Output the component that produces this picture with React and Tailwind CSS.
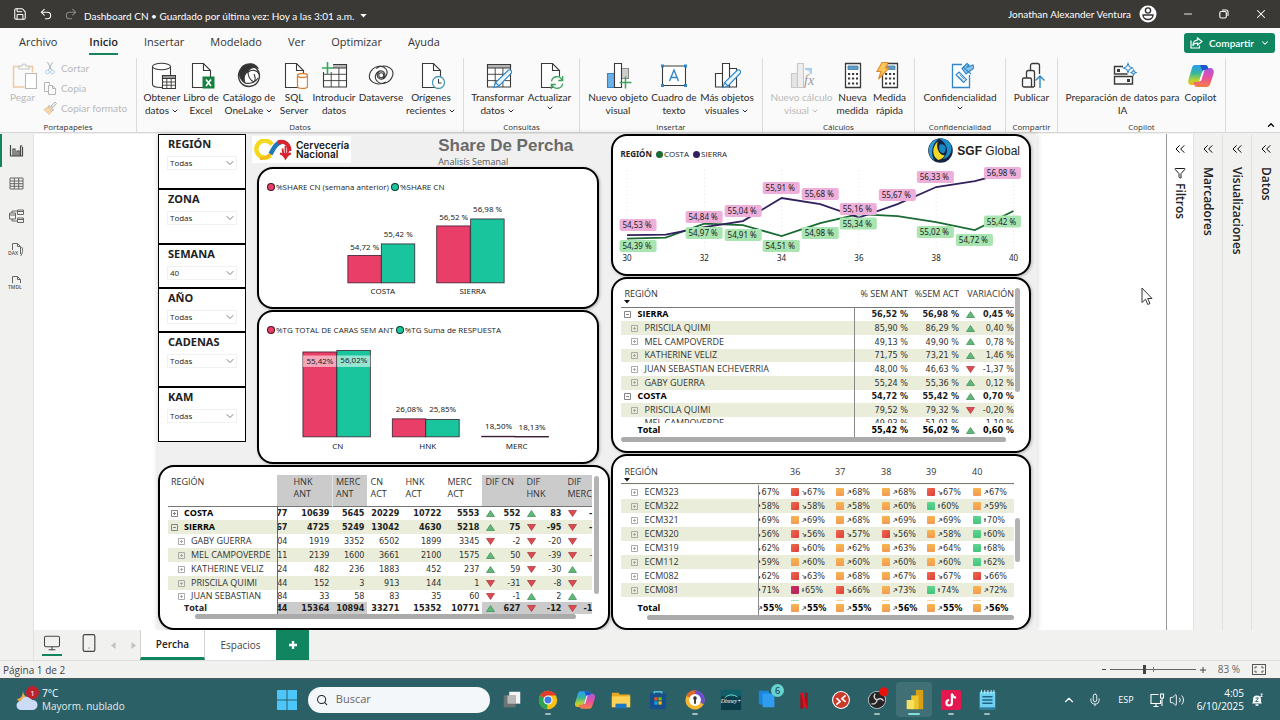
import React from "react";
import {
  Save, Undo2, Redo2, Minus, X, Search, ChevronDown, ChevronUp, ChevronsLeft,
  Filter, Mic, Volume2, Smartphone, Monitor,
} from "lucide-react";

const BLUE = "#2f86c8";
const GREEN = "#3ba55d";
const INK = "#3b3a39";

/* ---------- ribbon icons (28 x 28) ---------- */

const Icon = ({ children }) => (
  <svg viewBox="0 0 28 28" className="h-7 w-7 shrink-0" fill="none" stroke={INK} strokeWidth="1.1">
    {children}
  </svg>
);

const Page = () => (
  <>
    <path d="M5.5 1.5h11l7 7v17h-18z" fill="#fff" />
    <path d="M16.5 1.5v7h7" />
  </>
);

const Pencil = () => (
  <path d="M10 25.5l1.5-5L24 8.5a2 2 0 0 1 3 3L15 24z M11.5 20.5l3.5 3.5" fill="#e8f4fc" stroke={BLUE} />
);

const PasteIcon = () => (
  <Icon>
    <g stroke="#f0c9a0"><path d="M10 4.5H4.5v20.5h11M20 4.5h3.5v6" strokeWidth="1.5" /></g>
    <path d="M10 7V4h3a2 2 0 0 1 4 0h3v3z" stroke="#c4c4c4" fill="#fafafa" />
    <path d="M16.5 11.5h11v15h-11z" stroke="#b9b9b9" fill="#fff" />
  </Icon>
);
const DataIcon = () => (
  <Icon>
    <path d="M4.5 4.5v18c0 4 18 4 18 0v-18" fill="#fff" />
    <ellipse cx="13.5" cy="4.5" rx="9" ry="3.2" fill="#fff" />
    <path d="M14.5 13.5h13v13h-13z" fill="#fff" />
    <path d="M14.5 13.5h13v3h-13z" fill="#9a9a9a" />
    <path d="M14.5 20h13M14.5 23.2h13M18.8 16.5v10M23.2 16.5v10" strokeWidth=".9" />
  </Icon>
);
const ExcelIcon = () => (
  <Icon>
    <Page />
    <rect x="15.5" y="14.5" width="12" height="12" fill="#15803f" stroke="none" />
    <path d="M19 17.5l5 6.5M24 17.5l-5 6.5" stroke="#fff" strokeWidth="1.7" />
  </Icon>
);
const OneLakeIcon = () => (
  <Icon>
    <circle cx="14" cy="14" r="10.5" strokeWidth="1.3" fill="#fff" />
    <path d="M8 4c5-3.5 12-3 15 2-5-1.5-9 0-10 4-3 1-5 5-3 11-6-4-8-11-2-17z" fill="#333" />
    <path d="M13 10c0 5 2 8 6 10M13 10c4-3 9-2 11 2M10 21c4 1 10 0 13-5M19 20c1.5-2 1.5-5 0-8" stroke="#333" />
  </Icon>
);
const SqlIcon = () => (
  <Icon>
    <Page />
    <path d="M17.5 13.5v11c0 2.5 10 2.5 10 0v-11" fill="#fff" stroke="#d98032" strokeWidth="1.3" />
    <ellipse cx="22.5" cy="13.5" rx="5" ry="2" fill="#fff" stroke="#d98032" strokeWidth="1.3" />
  </Icon>
);
const Grid = () => (
  <>
    <path d="M3.5 2.5h23v22.5h-23z" fill="#fff" />
    <path d="M3.5 2.5h23v3.5h-23z" fill="#b5b5b5" />
    <path d="M3.5 12.3h23M3.5 18.6h23M11.2 6v19M18.9 6v19" strokeWidth=".9" />
  </>
);
const EnterIcon = () => (
  <Icon>
    <Grid />
    <path d="M1 0h12v10H1z" fill="#fafafa" stroke="none" />
    <path d="M7.5 0v12M2 6h11.5" stroke={GREEN} strokeWidth="1.6" />
  </Icon>
);
const DataverseIcon = () => (
  <Icon>
    <path d="M19 20C9 25 0 19 3 11 6 4 15 2 19 7c3 4-1 11-6 10-3-1-4-5-1-7" />
    <path d="M9 6.5C18 1 28 6 25.5 14 23 21 14 24 10 19c-4-4 0-11 5-10 3 1 4 5 1 7" />
    <circle cx="14.2" cy="13.2" r="2.5" />
  </Icon>
);
const RecentIcon = () => (
  <Icon>
    <Page />
    <circle cx="21.5" cy="20.5" r="6" fill="#fff" stroke="#4b9db5" strokeWidth="1.3" />
    <path d="M21.5 17v4h3" />
  </Icon>
);
const TransformIcon = () => <Icon><Grid /><Pencil /></Icon>;
const RefreshIcon = () => (
  <Icon>
    <Page />
    <circle cx="21" cy="20.5" r="6.5" fill="#fafafa" stroke="none" />
    <path d="M15.5 19.5a5.5 5.5 0 0 1 10.5-1.5M26.7 14v4.5h-4.5M26.7 21.5a5.5 5.5 0 0 1-10.5 1.5M15.3 27v-4.5h4.5" stroke={GREEN} strokeWidth="1.3" />
  </Icon>
);
const NewVisualIcon = () => (
  <Icon>
    <path d="M3.5 11.5h7v14h-7z" fill="#69b1e6" stroke={BLUE} />
    <path d="M17.5 6.5h7v10h-7z" fill="#cfcfcf" stroke="#8a8a8a" />
    <path d="M10.5 1.5h7v24h-7z" fill="#fff" />
    <path d="M21.5 14.5v12M15.5 20.5h12" stroke={GREEN} strokeWidth="1.5" />
  </Icon>
);
const TextBoxIcon = () => (
  <Icon>
    <path d="M2.5 4h23v19.5h-23z" fill="#fff" />
    <path d="M9.5 19L14 8l4.5 11M11 15.5h6" stroke={BLUE} strokeWidth="1.4" />
    <g fill={BLUE} stroke="none">
      <rect x="1" y="2.5" width="3" height="3" /><rect x="24" y="2.5" width="3" height="3" />
      <rect x="1" y="22" width="3" height="3" /><rect x="24" y="22" width="3" height="3" />
    </g>
  </Icon>
);
const MoreVisualsIcon = () => (
  <Icon>
    <path d="M2.5 11.5h7v13.5h-7zM16.5 6.5h7v18.5h-7z" fill="#fff" />
    <path d="M9.5 1.5h7V25h-7z" fill="#fff" />
    <Pencil />
  </Icon>
);
const NewCalcIcon = () => (
  <Icon>
    <g stroke="#c8c8c8">
      <path d="M3.5 11.5h6v14h-6z" fill="#e4e4e4" /><path d="M9.5 1.5h6v24h-6z" fill="#eee" />
      <path d="M17 7h6v5" fill="#cfe3f2" stroke="#a9cfe8" strokeWidth="2" />
    </g>
    <text x="16" y="23" fontFamily="Liberation Serif, serif" fontSize="14" fontStyle="italic" fill="#999" stroke="none">fx</text>
  </Icon>
);
const Calc = ({ x = 6 }) => (
  <g transform={`translate(${x} 0)`}>
    <path d="M.5 1.5h15v24H.5z" fill="#fff" strokeWidth="1.3" />
    <path d="M3 4h10v3.5H3z" fill="#5b9fd0" stroke="#47769b" strokeWidth=".8" />
    <path d="M3 12h10M3 16.5h10M3 21.5h10" strokeDasharray="2.2 1.8" strokeWidth="2.2" />
  </g>
);
const MeasureIcon = () => <Icon><Calc x={6} /></Icon>;
const QuickIcon = () => (
  <Icon>
    <Calc x={6} />
    <path d="M6 .5h6L9.5 6H13L2.5 17 5 9.5H1z" fill="#fbc75a" stroke="#e08a2c" />
  </Icon>
);
const SensitivityIcon = () => (
  <Icon>
    <path d="M16 2.5H6.5v23h17V13" stroke={BLUE} strokeWidth="1.3" fill="#fff" />
    <g stroke={BLUE} fill="#fff">
      <path d="M10 13l3-3 7.5 7.5-3 3z" /><path d="M12 14l5.5 5M13.5 12.5l5 5" strokeWidth=".8" />
      <path d="M16 6.5l5-5 2 1.5-2.5 2.5L27 3l1 3-8 6z" fill="#8cc3ea" />
      <path d="M17 5l8 7" />
    </g>
  </Icon>
);
const PublishIcon = () => (
  <Icon>
    <path d="M12.5 8.5V3.5a2 2 0 0 1 2-2h5a2 2 0 0 1 2 2V12M8.5 16v-5.5a2 2 0 0 1 2-2h4a2 2 0 0 1 2 2V25M16 25H6a1.5 1.5 0 0 1-1.5-1.5v-6A1.5 1.5 0 0 1 6 16h6a1.5 1.5 0 0 1 1.5 1.5V25" strokeWidth="1.3" />
    <path d="M22 26V14M17.5 18.5L22 14l4.5 4.5" stroke={BLUE} strokeWidth="1.4" />
  </Icon>
);
const PrepIcon = () => (
  <Icon>
    <path d="M14 4.5H5.5v7.5h13M5.5 14.5h18V22h-18z" strokeWidth="1.4" />
    <path d="M8 7h3v3H8zM18 17h3v3h-3z" fill={INK} stroke="none" />
    <path d="M19 1.5l1.3 3.2 3.2 1.3-3.2 1.3L19 10.5l-1.3-3.2L14.5 6l3.2-1.3zM24.5 8l.8 1.7 1.7.8-1.7.8-.8 1.7-.8-1.7-1.7-.8 1.7-.8z" stroke={BLUE} fill="#fff" />
  </Icon>
);
const CopilotShape = ({ id, className }) => (
  <svg viewBox="0 0 28 28" className={className}>
    <defs>
      <linearGradient id={id + "a"} x1="0" y1="0" x2="0" y2="1">
        <stop offset="0" stopColor="#2a9df4" /><stop offset=".4" stopColor="#35b6a0" />
        <stop offset=".75" stopColor="#b5d334" /><stop offset="1" stopColor="#f7b526" />
      </linearGradient>
      <linearGradient id={id + "b"} x1="0" y1="0" x2="0" y2="1">
        <stop offset="0" stopColor="#a65ae8" /><stop offset=".5" stopColor="#e94f9c" /><stop offset="1" stopColor="#f58046" />
      </linearGradient>
    </defs>
    <path d="M8 3h10c2 0 2.5 1 3 3l1 3h-4c-2 0-3 1-3.5 3l-2.5 8c-.6 2-1.5 3-3.5 3H5c-3 0-4.5-2-3.5-5.5l3-10C5.2 4.3 6.2 3 8 3z" fill={`url(#${id}a)`} />
    <path d="M20 25H10c-2 0-2.5-1-3-3l-.5-2h4c2 0 3-1 3.5-3l2.5-8c.6-2 1.5-3 3.5-3h3c3 0 4.5 2.5 3.5 6l-3 9c-.8 2.7-1.7 4-3.5 4z" fill={`url(#${id}b)`} />
    <path d="M13 3h5c2 0 2.5 1 3 3l.4 1.2C18 7 16.5 8 16 10z" fill="#1d57c9" />
    <path d="M12.5 18.5l3-9c.4-1 1-1.5 2-1.5l-3 10c-.4 1-1 1.5-2 .5z" fill="#fff" opacity=".9" />
  </svg>
);
const CopilotIcon = () => <CopilotShape id="rb" className="h-7 w-7" />;

/* ---------- ribbon ---------- */

const RibbonButton = ({ icon: I, l1, l2, caret, w, off }) => (
  <button className={`flex ${w} shrink-0 flex-col items-center pt-1 font-['Lato'] text-[10px] leading-[13px] whitespace-nowrap ${off ? "text-[#b9b9b9]" : "text-[#2b2b2b]"}`}>
    <I />
    <span className="mt-px">{l1}</span>
    <span className="flex items-center justify-center gap-0.5">
      {l2}
      {caret && <ChevronDown className="size-2" strokeWidth={3} />}
    </span>
  </button>
);

const RibbonGroup = ({ label, w, children }) => (
  <section className={`flex ${w} shrink-0 flex-col border-r border-[#dcdcdc] text-[#333]`} aria-label={label}>
    <div className="flex flex-1 justify-center">{children}</div>
    <div className="text-center text-[8px] leading-[11px]">{label}</div>
  </section>
);

const Small = ({ children, icon }) => (
  <button className="flex h-5 items-center gap-1 font-['Lato'] text-[10px] whitespace-nowrap text-[#b9b9b9]">
    {icon}
    {children}
  </button>
);

const Ribbon = () => (
  <div className="flex h-[75px] overflow-hidden border-b border-[#d6d6d6] bg-[#fafafa]">
    <RibbonGroup label="Portapapeles" w="w-[137px]">
      <div className="flex w-full gap-0.5 pl-1">
        <RibbonButton icon={PasteIcon} l1="Pegar" w="w-[37px]" off />
        <div className="flex flex-col">
          <Small icon={<svg viewBox="0 0 14 14" className="size-3.5" fill="none" stroke="#a8b4bd"><path d="M4.5 1l4 8M9.5 1l-4 8" /><circle cx="4.5" cy="11" r="1.8" stroke="#a9cfe8" /><circle cx="9.5" cy="11" r="1.8" stroke="#a9cfe8" /></svg>}>Cortar</Small>
          <Small icon={<svg viewBox="0 0 14 14" className="size-3.5" fill="none" stroke="#b5b5b5"><path d="M5 10.5H1.5v-9h5v2M5.5 4.5h4l3 3v6h-7z M9.5 4.5v3h3" /></svg>}>Copia</Small>
          <Small icon={<svg viewBox="0 0 14 14" className="size-3.5" stroke="#bdb5ad"><path d="M8 5l4-4 1.5 1.5L10 6.5z" fill="#eee" /><path d="M6 4.5l4.5 4.5-1.5 1L5 6z" fill="#ddd" /><path d="M5 6l4 4-3 3.5L1 8.5z" fill="#f6d7ad" stroke="#ecc394" /></svg>}>Copiar formato</Small>
        </div>
      </div>
    </RibbonGroup>
    <RibbonGroup label="Datos" w="w-[327px]">
      <RibbonButton icon={DataIcon} l1="Obtener" l2="datos" caret w="w-[38px]" />
      <RibbonButton icon={ExcelIcon} l1="Libro de" l2="Excel" w="w-[40px]" />
      <RibbonButton icon={OneLakeIcon} l1="Catálogo de" l2="OneLake" caret w="w-[56px]" />
      <RibbonButton icon={SqlIcon} l1="SQL" l2="Server" w="w-[34px]" />
      <RibbonButton icon={EnterIcon} l1="Introducir" l2="datos" w="w-[46px]" />
      <RibbonButton icon={DataverseIcon} l1="Dataverse" w="w-[48px]" />
      <RibbonButton icon={RecentIcon} l1="Orígenes" l2="recientes" caret w="w-[52px]" />
    </RibbonGroup>
    <RibbonGroup label="Consultas" w="w-[116px]">
      <RibbonButton icon={TransformIcon} l1="Transformar" l2="datos" caret w="w-[56px]" />
      <RibbonButton icon={RefreshIcon} l1="Actualizar" l2="" caret w="w-[48px]" />
    </RibbonGroup>
    <RibbonGroup label="Insertar" w="w-[183px]">
      <RibbonButton icon={NewVisualIcon} l1="Nuevo objeto" l2="visual" w="w-[63px]" />
      <RibbonButton icon={TextBoxIcon} l1="Cuadro de" l2="texto" w="w-[49px]" />
      <RibbonButton icon={MoreVisualsIcon} l1="Más objetos" l2="visuales" caret w="w-[57px]" />
    </RibbonGroup>
    <RibbonGroup label="Cálculos" w="w-[152px]">
      <RibbonButton icon={NewCalcIcon} l1="Nuevo cálculo" l2="visual" caret w="w-[66px]" off />
      <RibbonButton icon={MeasureIcon} l1="Nueva" l2="medida" w="w-[36px]" />
      <RibbonButton icon={QuickIcon} l1="Medida" l2="rápida" w="w-[38px]" />
    </RibbonGroup>
    <RibbonGroup label="Confidencialidad" w="w-[91px]">
      <RibbonButton icon={SensitivityIcon} l1="Confidencialidad" l2="" caret w="w-[76px]" />
    </RibbonGroup>
    <RibbonGroup label="Compartir" w="w-[52px]">
      <RibbonButton icon={PublishIcon} l1="Publicar" w="w-[38px]" />
    </RibbonGroup>
    <RibbonGroup label="Copilot" w="w-[168px]">
      <RibbonButton icon={PrepIcon} l1="Preparación de datos para" l2="IA" w="w-[118px]" />
      <RibbonButton icon={CopilotIcon} l1="Copilot" w="w-[38px]" />
    </RibbonGroup>
    <button aria-label="Contraer cinta" className="mt-auto mr-1 mb-0.5 ml-auto">
      <ChevronUp className="size-2.5" strokeWidth={3} />
    </button>
  </div>
);

const TitleBar = () => (
  <header className="flex h-7 items-center bg-[#3a3936] pr-3 pl-[13px] font-['Lato'] text-[10px] text-white">
    <button aria-label="Guardar"><Save className="size-3.5" strokeWidth={1.8} /></button>
    <button aria-label="Deshacer" className="ml-3"><Undo2 className="size-3.5" strokeWidth={1.8} /></button>
    <button aria-label="Rehacer" className="ml-[11px] text-[#8a8988]"><Redo2 className="size-3.5" strokeWidth={1.8} /></button>
    <h1 className="ml-1.5 flex items-center gap-1.5 pt-1 whitespace-nowrap">
      Dashboard CN • Guardado por última vez: Hoy a las 3:01 a.m.
      <svg viewBox="0 0 8 5" className="h-1 w-[7px]" fill="#fff"><path d="M0 0h8L4 4.5z" /></svg>
    </h1>
    <span className="ml-auto">Jonathan Alexander Ventura</span>
    <svg viewBox="0 0 18 18" className="ml-2 size-[18px]"><circle cx="9" cy="9" r="8.5" fill="#fff" /><g fill="none" stroke="#333" strokeWidth="1.4"><circle cx="9" cy="5.5" r="2.6" /><path d="M4 10h10c0 6-10 6-10 0z" /></g></svg>
    <button aria-label="Minimizar" className="ml-[25px]"><Minus className="size-3" strokeWidth={1.8} /></button>
    <button aria-label="Restaurar" className="ml-[25px]">
      <svg viewBox="0 0 10 10" className="size-2.5" fill="none" stroke="#fff" strokeWidth="1.1"><rect x=".8" y="2.5" width="6.5" height="6.5" rx="1.5" /><path d="M3 1h4a2 2 0 0 1 2 2v4" /></svg>
    </button>
    <button aria-label="Cerrar" className="ml-[25px]"><X className="size-3.5" strokeWidth={1.8} /></button>
  </header>
);

const Tabs = () => (
  <nav className="flex h-[30px] items-center gap-[26px] bg-[#fafafa] pr-[5px] pl-[19px] text-[11px] text-[#333]">
    {["Archivo", "Inicio", "Insertar", "Modelado", "Ver", "Optimizar", "Ayuda"].map((t, i) => (
      <a key={t} href="#" className={`flex h-6 items-center border-b-2 ${i === 0 ? "mr-1.5" : ""} ${t === "Inicio" ? "border-[#16835b] font-semibold text-[#1f1f1f]" : "border-transparent"}`}>{t}</a>
    ))}
    <button className="ml-auto flex h-5 items-center gap-1.5 rounded-[3px] bg-[#118560] px-[5px] font-['Lato'] text-[10px] font-semibold text-white">
      <svg viewBox="0 0 14 12" className="h-3 w-3.5" fill="none" stroke="#fff" strokeWidth="1.2"><path d="M2 3.5v7.5h8.5V8.5" /><path d="M8.5 1l4.5 3.5L8.5 8V6C6 6 4.5 7 3.8 9 4 5 6 3.2 8.5 3z" /></svg>
      Compartir
      <ChevronDown className="size-2.5" strokeWidth={2.5} />
    </button>
  </nav>
);

/* ---------- left view rail ---------- */

const Rail = () => {
  const s = { fill: "none", stroke: "#666", strokeWidth: 1 };
  const t = { fontFamily: "Open Sans, sans-serif", fontSize: 5, fill: "#555", stroke: "none", fontWeight: 600 };
  const items = [
    ["Informe", <g stroke="#444" strokeWidth="1.2"><path d="M2.5 3v11h12V5M5 14V7h2v7M9 14V9h2v5M12.5 14V4h2" /></g>],
    ["Tabla", <path d="M2 3h13v11H2zM2 6h13M2 8.7h13M2 11.3h13M6.3 3v11M10.7 3v11" />],
    ["Modelo", <path d="M1.5 5h6v6h-6zM1.5 7h6M9.5 2h6v4.5h-6zM9.5 3.5h6M9.5 10h6v4.5h-6zM9.5 11.5h6M4 5V3h5.5M4 11v2h5.5" />],
    ["DAX", <><path d="M4.5 9V2.5h5l3 3V13M9.5 2.5v3h3M13.5 6c2 2 1 7-1 9" /><text x="0" y="14" {...t}>DAX</text></>],
    ["TMDL", <><path d="M4.5 9V2.5h5l3 3V9M9.5 2.5v3h3" /><text x="0" y="15" {...t}>TMDL</text></>],
  ];
  return (
    <nav className="flex w-[34px] shrink-0 flex-col border-r border-[#e2e2e2] bg-[#f1f1f0]" aria-label="Vistas">
      {items.map(([n, g], i) => (
        <button key={n} aria-label={n} className={`flex h-[33px] items-center justify-center border-l-2 pr-0.5 ${i === 0 ? "border-[#118560]" : "border-transparent"}`}>
          <svg viewBox="0 0 17 17" className="size-[17px] overflow-visible" {...s}>{g}</svg>
        </button>
      ))}
    </nav>
  );
};

/* ---------- report ---------- */

const Slicer = ({ label, value = "Todas", tall }) => (
  <div className={`border border-black bg-white px-2 pt-[3px] ${tall ? "h-[55px]" : "h-[44px]"}`}>
    <label htmlFor={label} className="block pl-px font-['Noto_Sans'] text-[11px] leading-3 font-bold text-[#222]">{label}</label>
    <div className="relative mt-1.5 flex items-center border border-[#f1f1f1]">
      <select id={label} defaultValue={value} className="h-3 w-full appearance-none bg-transparent pl-0.5 text-[8px] leading-3 text-[#222]">
        <option>{value}</option>
      </select>
      <ChevronDown className="pointer-events-none absolute right-0 size-3 text-[#444]" strokeWidth={1.4} />
    </div>
  </div>
);

const Card = ({ className = "", children }) => (
  <section className={`overflow-hidden rounded-[16px] border-2 border-black bg-white shadow-[1px_1px_3px_rgba(0,0,0,0.25)] ${className}`}>{children}</section>
);

const Legend = ({ items }) => (
  <div className="flex items-center gap-0.5 pl-2 text-[8px] leading-[10px] whitespace-nowrap text-[#222]">
    {items.map(([c, t]) => (
      <span key={t} className="flex items-center gap-px">
        <i className={`size-2 rounded-full border border-black/70 ${c}`} />{t}
      </span>
    ))}
  </div>
);

const chartText = { fontFamily: "'Noto Sans', sans-serif", fontSize: 8, fill: "#222", textAnchor: "middle" };
const RED = "#e93e67";
const TEAL = "#18c59c";

const Bars = ({ view, bars, base, cats, catY }) => (
  <svg viewBox={view} className="block w-full">
    {bars.map(([x, y, c, label, ly, band]) => (
      <g key={label}>
        <rect x={x} y={y} width="33.5" height={Math.max(base - y, 0.6)} fill={c} stroke="#3a2030" strokeWidth=".8" />
        {band && <rect x={x} y="355.5" width="33.5" height="11.5" fill="#fff" opacity=".55" />}
        <text x={x + 17} y={ly + 3} {...chartText}>{label}</text>
      </g>
    ))}
    {cats.map(([t, x]) => <text key={t} x={x} y={catY} {...chartText}>{t}</text>)}
  </svg>
);

const CervLogo = () => (
  <div className="flex h-[27px] items-center gap-[3px] bg-white pr-0.5 pl-px">
    <svg viewBox="0 0 40 22" className="h-[22px] w-10" fill="none">
      <path d="M19 5.5A8.500 8.500 0 1 0 17.500 16.500" stroke="#f5d71d" strokeWidth="4.5" />
      <path d="M7 19.5c6 .5 9-2 11.5-6" stroke="#f2b91d" strokeWidth="3" />
      <path d="M17.5 15c3-5 5-11 11-12" stroke="#2177b9" strokeWidth="4.5" />
      <path d="M25 3.5C32 1 36.5 6 36.5 12" stroke="#d8242f" strokeWidth="4" />
      <path d="M27 14.5c2.5.5 4 2 5.5 5 1.5-3 3-4.5 5.5-5M32.5 7v12M29.5 9.5c0 4 1 6 3 8 2-2 3-4 3-8" stroke="#d8242f" strokeWidth="1.8" />
    </svg>
    <div className="font-['Inter'] text-[10px] leading-[9px] font-semibold text-[#161616]">Cervecería<br />Nacional</div>
  </div>
);

const SgfLogo = () => (
  <div className="flex items-center gap-1 pt-px">
    <svg viewBox="0 0 24 24" className="size-[25px]">
      <circle cx="12" cy="12" r="11.8" fill="#14233f" />
      <path d="M10 .8C-1 3-2 17 6 21.5 2 14 4 6 10 .8z" fill="#2d9fd6" />
      <path d="M11 1C21-1 26 10 20 17c-2 2.5-4 3-6 3 5-4 5-9 3-13-1.5-3-4-5-6-6z" fill="#1c8fc9" />
      <path d="M9.5 3C3 9 4 18 10 21c3-.5 5-2.5 6-4.5C11 17 7 9 9.5 3z" fill="#f1d928" />
      <path d="M11 6.5c5-2 8 3 4.5 8-4.5.5-5.5-4-4.5-8z" fill="#1b86c4" />
    </svg>
    <span className="font-['Liberation_Sans'] text-[12px] text-[#222]"><b>SGF</b> Global</span>
  </div>
);

const weekX = (i) => 628 + i * 38.6;
const sierraY = [235, 234.5, 227, 221, 198, 204, 217.5, 204, 187, 181, 171];
const costaY = [238.5, 237.5, 223.5, 225, 236, 223, 214, 216, 222, 230, 211];
const toPoints = (ys) => ys.map((y, i) => `${weekX(i)},${y}`).join(" ");
const pinkTags = [[639, 225, "54,53 %"], [705, 217, "54,84 %"], [744, 211, "55,04 %"], [782, 188, "55,91 %"], [821, 194, "55,68 %"], [859, 209, "55,16 %"], [898, 195, "55,67 %"], [936, 177, "56,33 %"], [1003, 173, "56,98 %"]];
const greenTags = [[639, 246, "54,39 %"], [705, 233, "54,97 %"], [744, 235, "54,91 %"], [782, 246, "54,51 %"], [821, 233, "54,98 %"], [859, 223.5, "55,34 %"], [936, 232, "55,02 %"], [975, 240, "54,72 %"], [1003, 221.5, "55,42 %"]];

const Tag = ({ x, y, t, c }) => (
  <g>
    <rect x={x - 18.5} y={y - 6} width="37" height="12" rx="2" fill={c} />
    <text x={x - 1} y={y + 3} {...chartText}>{t}</text>
  </g>
);

const LineChart = () => (
  <svg viewBox="614 164 415 110" className="block w-full">
    {[0, 2, 4, 6, 8, 10].map((i) => (
      <g key={i}>
        <path d={`M${weekX(i)} 170V250`} stroke="#d9d9d9" strokeWidth=".8" strokeDasharray="1 3" />
        <text x={weekX(i)} y="261" {...chartText}>{30 + i}</text>
      </g>
    ))}
    <polyline points={toPoints(costaY)} fill="none" stroke="#1a6b33" strokeWidth="1.8" />
    <polyline points={toPoints(sierraY)} fill="none" stroke="#33205e" strokeWidth="1.8" />
    {greenTags.map(([x, y, t]) => <Tag key={t} x={x} y={y} t={t} c="#a8e5b0" />)}
    {pinkTags.map(([x, y, t]) => <Tag key={t} x={x} y={y} t={t} c="#eeb0db" />)}
  </svg>
);

/* ---------- matrices ---------- */

const Tri = ({ up }) => (
  <svg viewBox="0 0 9 7" className="h-[7px] w-[9px] shrink-0">
    {up ? <path d="M4.5.5L8.5 6.5H.5z" fill="#5fb878" stroke="#3c8a53" strokeWidth=".7" /> : <path d="M4.5 6.5L8.5.5H.5z" fill="#dd4a50" stroke="#a8323a" strokeWidth=".7" />}
  </svg>
);

const Toggle = ({ open, dim }) => (
  <svg viewBox="0 0 7 7" className="size-[7px] shrink-0" fill="none" stroke={dim ? "#a3a3a3" : "#777"} strokeWidth=".9">
    <path d={open ? "M.5.5h6v6h-6zM2 3.5h3" : "M.5.5h6v6h-6zM2 3.5h3M3.5 2v3"} />
  </svg>
);

const SortMark = () => <svg viewBox="0 0 6 4" className="h-1 w-1.5"><path d="M0 0h6L3 3.5z" fill="#111" /></svg>;

const RowLabel = ({ level, open, children, className = "" }) => (
  <th scope="row" className={`overflow-hidden p-0 text-left whitespace-nowrap ${level ? "font-normal" : "font-bold text-black"} ${className}`}>
    <span className={`flex items-center gap-1.5 leading-3 ${level ? "pl-2.5" : "pl-[3px]"}`}>
      <Toggle open={open} dim={level > 0} />{children}
    </span>
  </th>
);

const num = "font-['DejaVu_Sans_Condensed'] text-[9px] leading-3 text-right whitespace-nowrap p-0";
const stripe = "bg-[#e9edd9]";

const variation = [
  [0, "SIERRA", "56,52 %", "56,98 %", 1, "0,45 %"],
  [1, "PRISCILA QUIMI", "85,90 %", "86,29 %", 1, "0,40 %"],
  [1, "MEL CAMPOVERDE", "49,13 %", "49,90 %", 1, "0,78 %"],
  [1, "KATHERINE VELIZ", "71,75 %", "73,21 %", 1, "1,46 %"],
  [1, "JUAN SEBASTIAN ECHEVERRIA", "48,00 %", "46,63 %", 0, "-1,37 %"],
  [1, "GABY GUERRA", "55,24 %", "55,36 %", 1, "0,12 %"],
  [0, "COSTA", "54,72 %", "55,42 %", 1, "0,70 %"],
  [1, "PRISCILA QUIMI", "79,52 %", "79,32 %", 0, "-0,20 %"],
];

const Trend = ({ up, children }) => (
  <span className="flex items-center justify-between pl-[7px]"><Tri up={up} />{children}</span>
);

const Peek = ({ children }) => <div className="h-1.5 overflow-hidden leading-3">{children}</div>;

const VariationMatrix = () => (
  <div className="flex gap-px pt-[9px] pr-[9px] pl-2 text-[9px] text-[#333]">
    <div className="min-w-0 flex-1">
      <table className="h-[149px] w-full table-fixed border-collapse">
        <colgroup><col /><col className="w-[54px]" /><col className="w-[51px]" /><col className="w-[55px]" /></colgroup>
        <thead>
          <tr className="h-[19px] border-b border-[#777] align-top">
            <th className="p-0 pl-[3px] text-left leading-3 font-normal">REGIÓN<SortMark /></th>
            <th className="p-0 text-right leading-3 font-normal whitespace-nowrap">% SEM ANT</th>
            <th className="p-0 text-right leading-3 font-normal whitespace-nowrap">%SEM ACT</th>
            <th className="p-0 text-right leading-3 font-normal whitespace-nowrap">VARIACIÓN</th>
          </tr>
        </thead>
        <tbody>
          {variation.map(([lv, n, a, b, up, v], i) => (
            <tr key={i} className={`${i % 2 ? stripe : ""} ${lv ? "" : "font-bold text-[#222]"}`}>
              <RowLabel level={lv} open={!lv} className="border-r border-[#888]">{n}</RowLabel>
              <td className={num}>{a}</td>
              <td className={num}>{b}</td>
              <td className={num}><Trend up={up}>{v}</Trend></td>
            </tr>
          ))}
          <tr className="align-top">
            <th className="h-1.5 border-r border-[#888] p-0 pl-[23px] text-left font-normal"><Peek>MEL CAMPOVERDE</Peek></th>
            <td className={num}><Peek>49,93 %</Peek></td>
            <td className={num}><Peek>51,01 %</Peek></td>
            <td className={num}><Peek>1,10 %</Peek></td>
          </tr>
          <tr className="h-3.5 font-bold text-black">
            <th className="border-r border-[#888] p-0 pl-4 text-left leading-3">Total</th>
            <td className={num}>55,42 %</td>
            <td className={num}>56,02 %</td>
            <td className={num}><Trend up>0,60 %</Trend></td>
          </tr>
        </tbody>
      </table>
      <div className="mr-2 h-[5px] rounded-full bg-[#ababab]" />
    </div>
    <div className="h-[104px] w-[5px] rounded-full bg-[#b3b3b3]" />
  </div>
);

const squares = {
  r: "bg-linear-to-br from-[#f0694a] to-[#dc3c3c]",
  o: "bg-linear-to-b from-[#f7b64c] to-[#f29a55]",
  g: "bg-linear-to-b from-[#5fd592] to-[#42c580]",
  m: "bg-linear-to-br from-[#cf2c63] to-[#b3235c]",
};
const arrows = {
  r: "M1.5 3l3 3M4.7 4v2.2H2.5",
  o: "M1.5 6l3-3M2.5 2.8h2.2V5",
  g: "M3 7V2M2 3.2L3 2l1 1.2",
  m: "M3 1v5M2 4.8L3 6l1-1.2",
};

const Mark = ({ k }) => (
  <svg viewBox="0 0 6 8" className={`h-2 shrink-0 ${k === "g" || k === "m" ? "w-1" : "w-1.5"}`} fill="none" stroke="#333" strokeWidth={k === "g" || k === "m" ? "1.5" : ".9"}><path d={arrows[k]} /></svg>
);

const heat = [
  ["ECM323", "r67 r67 o68 o68 r67 o67"],
  ["ECM322", "o58 r58 o58 o60 g60 o59"],
  ["ECM321", "o69 o69 o68 o69 o69 g70"],
  ["ECM320", "r56 r56 r57 r56 o58 g60"],
  ["ECM319", "r62 r60 o62 o63 o64 g68"],
  ["ECM112", "o59 o60 o60 o60 o60 g62"],
  ["ECM082", "r62 r63 o68 o67 r67 r66"],
  ["ECM081", "o71 m65 r66 o73 g74 o72"],
];

const HeatCells = ({ row, wide }) =>
  row.split(" ").map((c, i) => (
    <td key={i} className={`${num} overflow-hidden`}>
      {i === 0 ? (
        <span className={`flex items-center justify-end overflow-hidden ${wide ? "w-6" : "w-[21px]"}`}><Mark k={c[0]} />{c.slice(1)}%</span>
      ) : (
        <span className="flex items-center pl-1">
          <i className={`mr-0.5 size-2 shrink-0 rounded-[1px] ${squares[c[0]]}`} />
          <Mark k={c[0]} />{c.slice(1)}%
        </span>
      )}
    </td>
  ));

const HeatMatrix = () => (
  <div className="flex gap-px pt-2.5 pr-[9px] pl-2 text-[9px] text-[#333]">
    <div className="min-w-0 flex-1">
      <table className="h-[149px] w-full table-fixed border-collapse">
        <colgroup><col /><col className="w-[29px]" /><col className="w-[45px]" /><col className="w-[46px]" /><col className="w-[45px]" /><col className="w-[46px]" /><col className="w-[45px]" /></colgroup>
        <thead>
          <tr className="h-[17px] border-b border-[#777] align-top">
            <th className="p-0 pl-[3px] text-left leading-3 font-normal">REGIÓN<SortMark /></th>
            <th className="p-0" aria-label="35" />
            {[36, 37, 38, 39, 40].map((w) => <th key={w} className="p-0 pl-[3px] text-left leading-3 font-normal">{w}</th>)}
          </tr>
        </thead>
        <tbody>
          <tr><td colSpan={7} className="h-0.5 bg-[#f4f6ec] p-0" /></tr>
          {heat.map(([n, row], i) => (
            <tr key={n} className={i % 2 ? stripe : ""}>
              <RowLabel level={1} className="border-r border-[#888]">{n}</RowLabel>
              <HeatCells row={row} />
            </tr>
          ))}
          <tr>
            <td className="h-1 border-r border-[#888] p-0" />
            <td className="p-0" />
            {["bg-[#a8ddc0]", "bg-[#f2d79f]", "bg-[#f2d79f]", "bg-[#f2d79f]", "bg-[#f2d79f]"].map((c, i) => (
              <td key={i} className="p-0 pl-1 align-bottom"><div className={`h-px w-2 ${c}`} /></td>
            ))}
          </tr>
          <tr className="font-bold text-black">
            <th className="border-r border-[#888] p-0 pl-4 text-left leading-3">Total</th>
            <HeatCells row="o55 o55 o55 o56 o55 o56" wide />
          </tr>
        </tbody>
      </table>
      <div className="ml-[26px] h-[5px] rounded-full bg-[#ababab]" />
    </div>
    <div className="mt-[52px] h-11 w-[5px] rounded-full bg-[#b3b3b3]" />
  </div>
);

const diffs = [
  [0, "COSTA", "77 10639 5645 20229 10722 5553", 1, "552", 1, "83", 0, "-"],
  [0, "SIERRA", "67 4725 5249 13042 4630 5218", 1, "75", 0, "-95", 0, "-"],
  [1, "GABY GUERRA", "04 1919 3352 6502 1899 3345", 0, "-2", 0, "-20", 0, ""],
  [1, "MEL CAMPOVERDE", "11 2139 1600 3661 2100 1575", 1, "50", 0, "-39", 0, "-"],
  [1, "KATHERINE VELIZ", "24 482 236 1883 452 237", 1, "59", 0, "-30", 1, ""],
  [1, "PRISCILA QUIMI", "44 152 3 913 144 1", 0, "-31", 0, "-8", 0, ""],
  [1, "JUAN SEBASTIAN", "84 33 58 83 35 60", 0, "-1", 1, "2", 1, ""],
  [0, "Total", "44 15364 10894 33271 15352 10771", 1, "627", 0, "-12", 0, "-1"],
];

const DiffMatrix = () => {
  const gray = "bg-[#cbcbcb]";
  const heads = [["", gray], ["HNK ANT", gray], ["MERC ANT", gray + " border-l border-[#e4e4e4]"], ["CN ACT", ""], ["HNK ACT", ""], ["MERC ACT", ""], ["DIF CN", gray], ["DIF HNK", gray], ["DIF MERC", gray]];
  return (
    <div className="flex gap-0.5 pt-2 pr-[9px] pl-2 text-[9px] text-[#333]">
      <div className="min-w-0 flex-1">
        <table className="w-full table-fixed border-collapse">
          <colgroup><col /><col className="w-[13px]" /><col className="w-[42px]" /><col className="w-[35px]" /><col className="w-[35px]" /><col className="w-[42px]" /><col className="w-[38px]" /><col className="w-[41px]" /><col className="w-[41px]" /><col className="w-[28px]" /></colgroup>
          <thead>
            <tr className="h-[31px] border-b border-[#777] align-top">
              <th className="p-0 pt-px pl-[3px] text-left leading-3 font-normal">REGIÓN</th>
              {heads.map(([h, c], i) => (
                <th key={i} className={`p-0 pt-px pl-[3px] text-left leading-3 font-normal ${c}`}>
                  {h === "DIF CN" ? h : h.split(" ").map((p) => <div key={p}>{p}</div>)}
                </th>
              ))}
            </tr>
          </thead>
          <tbody>
            {diffs.map(([lv, n, vals, u1, d1, u2, d2, u3, d3], i) => {
              const total = n === "Total";
              const g = total ? gray : "";
              return (
                <tr key={n} className={`${i > 5 ? "h-3" : "h-3.5"} ${i % 2 && !total ? stripe : ""} ${lv ? "" : "font-bold text-[#222]"}`}>
                  {total ? (
                    <th scope="row" className="border-r border-[#666] p-0 pl-4 text-left leading-3">Total</th>
                  ) : (
                    <RowLabel level={lv} open={n === "SIERRA"} className="border-r border-[#666]">{n}</RowLabel>
                  )}
                  {vals.split(" ").map((v, j) => <td key={j} className={`${num} pr-[3px] ${j < 3 ? g : ""}`}><span className={j ? "" : "flex justify-end overflow-hidden"}>{v}</span></td>)}
                  <td className={`${num} ${g}`}><span className="flex items-center justify-between pr-[3px] pl-1"><Tri up={u1} />{d1}</span></td>
                  <td className={`${num} ${g}`}><span className="flex items-center justify-between pr-[3px] pl-1"><Tri up={u2} />{d2}</span></td>
                  <td className={`${num} ${g}`}><span className="flex items-center justify-between pl-1"><Tri up={u3} />{d3}</span></td>
                </tr>
              );
            })}
          </tbody>
        </table>
        <div className="mr-4 ml-[27px] h-[5px] rounded-full bg-[#ababab]" />
      </div>
      <div className="mt-px h-[118px] w-[5px] rounded-full bg-[#b3b3b3]" />
    </div>
  );
};

const Report = () => (
  <main className="flex min-w-0 flex-1 items-start bg-white pr-[129px] pl-[124px]">
    <div className="flex min-w-0 flex-1 bg-[#f0f0f0] pr-1.5 shadow-[0_0_6px_rgba(0,0,0,0.18)]">
      <div className="flex min-w-0 flex-[453] flex-col gap-px">
        <div className="flex">
          <div className="w-[88px] shrink-0">
            <Slicer label="REGIÓN" tall />
            <Slicer label="ZONA" tall />
            <Slicer label="SEMANA" value="40" />
            <Slicer label="AÑO" />
            <Slicer label="CADENAS" tall />
            <Slicer label="KAM" tall />
          </div>
          <div className="flex min-w-0 flex-1 flex-col pr-[11px]">
            <div className="flex h-[33px] items-start gap-[87px] pt-0.5 pl-1.5">
              <CervLogo />
              <div className="text-[#6a6a6a]">
                <h2 className="font-['Liberation_Sans'] text-[17px] leading-5 font-bold whitespace-nowrap">Share De Percha</h2>
                <p className="text-[9px] leading-3 text-[#555]">Analisís Semanal</p>
              </div>
            </div>
            <div className="flex flex-col gap-px pl-[11px]">
              <Card className="h-[142px] pt-[13px]">
                <Legend items={[["bg-[#e93e67]", "%SHARE CN (semana anterior)"], ["bg-[#18c59c]", "%SHARE CN"]]} />
                <Bars view="259 192 339 115" base={283} catY={294}
                  bars={[[348, 255.5, RED, "54,72 %", 247], [381.5, 244, TEAL, "55,42 %", 234], [437, 226, RED, "56,52 %", 217], [471, 219, TEAL, "56,98 %", 209]]}
                  cats={[["COSTA", 383], ["SIERRA", 473]]} />
              </Card>
              <Card className="h-[154px] pt-[13px]">
                <Legend items={[["bg-[#e93e67]", "%TG TOTAL DE CARAS SEM ANT"], ["bg-[#18c59c]", "%TG Suma de RESPUESTA"]]} />
                <Bars view="259 335 339 127" base={437} catY={449}
                  bars={[[303, 352, RED, "55,42%", 361, 1], [337, 350.5, TEAL, "56,02%", 360, 1], [392.5, 419, RED, "26,08%", 409], [426, 419.5, TEAL, "25,85%", 409], [482, 436.4, RED, "18,50%", 426], [515.5, 436.6, TEAL, "18,13%", 427]]}
                  cats={[["CN", 338], ["HNK", 428], ["MERC", 517]]} />
              </Card>
            </div>
          </div>
        </div>
        <Card className="h-[165px]"><DiffMatrix /></Card>
      </div>
      <div className="flex min-w-0 flex-[420] flex-col gap-px pl-px">
        <Card className="h-[142px]">
          <div className="flex h-7 items-center justify-between pr-[9px] pl-[7px]">
            <div className="flex items-center gap-1 pt-2 text-[8px] leading-3 text-[#222]">
              <b className="font-['Noto_Sans']">REGIÓN</b>
              <span className="flex items-center gap-px"><i className="size-[7px] rounded-full bg-[#1a6b33]" />COSTA</span>
              <span className="flex items-center gap-px"><i className="size-[7px] rounded-full bg-[#33205e]" />SIERRA</span>
            </div>
            <SgfLogo />
          </div>
          <LineChart />
        </Card>
        <Card className="h-[176px]"><VariationMatrix /></Card>
        <Card className="h-[176px]"><HeatMatrix /></Card>
      </div>
    </div>
  </main>
);

const Pane = ({ label, filter, w = "w-[29px]", className = "" }) => (
  <aside className={`flex ${w} shrink-0 flex-col items-center gap-1 border-l pt-[7px] ${className}`}>
    <button aria-label={`Expandir ${label}`}><ChevronsLeft className="size-4" strokeWidth={1.5} /></button>
    {filter && <Filter className="mt-1.5 size-3" strokeWidth={1.8} />}
    <h3 className={`text-[12px] leading-4 font-semibold text-[#222] [writing-mode:vertical-rl] ${filter ? "" : "mt-1.5"}`}>{label}</h3>
  </aside>
);

const SheetTabs = () => (
  <div className="flex h-[31px] border-b border-[#dedede] bg-[#f1f1f0] text-[10px]">
    <div className="w-[34px] border-r border-[#e2e2e2]" />
    <button aria-label="Escritorio" className="ml-2 flex w-5 flex-col items-center justify-between pt-1 pb-1">
      <Monitor className="size-[18px] text-[#444]" strokeWidth={1.4} />
      <span className="h-0.5 w-full bg-[#118560]" />
    </button>
    <button aria-label="Móvil" className="ml-[17px]"><Smartphone className="mb-1 size-5 text-[#444]" strokeWidth={1.4} /></button>
    <div className="flex w-[41px] items-center justify-between pr-1 pl-3">
      <svg viewBox="0 0 5 7" className="h-[7px] w-[5px]" fill="#c2c2c2"><path d="M4.5 0v7L0 3.5z" /></svg>
      <svg viewBox="0 0 5 7" className="h-[7px] w-[5px]" fill="#c2c2c2"><path d="M.5 0v7L5 3.5z" /></svg>
    </div>
    <button className="w-[65px] border-x border-b-[3px] border-x-[#d5d5d5] border-b-[#118560] bg-white pt-0.5 font-semibold text-[#222]">Percha</button>
    <button className="w-[71px] bg-white text-[#444]">Espacios</button>
    <button aria-label="Nueva página" className="flex w-[33px] items-center justify-center bg-[#118560]">
      <svg viewBox="0 0 10 10" className="size-2.5"><path d="M5 1v8M1 5h8" stroke="#fff" strokeWidth="2.4" /></svg>
    </button>
  </div>
);

const StatusBar = () => (
  <div className="flex h-[18px] items-center border-b border-[#4a5a5c] bg-[#f1f1f0] pr-3.5 pl-[3px] text-[10px] text-[#444]">
    <span className="pt-0.5">Página 1 de 2</span>
    <div className="ml-auto flex items-center gap-1">
      <button aria-label="Alejar" className="h-px w-1 bg-[#444]" />
      <div className="relative flex items-center">
        <input type="range" aria-label="Zoom" defaultValue="40" className="h-3 w-[86px] appearance-none bg-transparent [&::-webkit-slider-runnable-track]:h-px [&::-webkit-slider-runnable-track]:bg-[#666] [&::-webkit-slider-thumb]:-mt-1 [&::-webkit-slider-thumb]:h-[9px] [&::-webkit-slider-thumb]:w-[3px] [&::-webkit-slider-thumb]:appearance-none [&::-webkit-slider-thumb]:bg-[#444]" />
        <span className="pointer-events-none absolute left-1/2 h-[5px] w-px bg-[#777]" />
      </div>
      <button aria-label="Acercar"><svg viewBox="0 0 6 6" className="size-1.5"><path d="M3 0v6M0 3h6" stroke="#444" /></svg></button>
      <span className="ml-2 text-[#666]">83 %</span>
      <button aria-label="Ajustar a la página" className="ml-2">
        <svg viewBox="0 0 14 11" className="h-[11px] w-3.5" fill="none" stroke="#555"><rect x=".5" y=".5" width="13" height="10" /><path d="M3 4.5V3h2M9 3h2v1.5M11 6.5V8H9M5 8H3V6.5" /></svg>
      </button>
    </div>
  </div>
);

/* ---------- taskbar ---------- */

const apps = [
  ["Vista de tareas", <><rect x="9" y="3" width="12" height="13" fill="#f4f4f4" /><rect x="3" y="7" width="13" height="13" fill="#777" opacity=".85" /><rect x="7" y="7" width="9" height="9" fill="#b9b9b9" /></>],
  ["Chrome", <><circle cx="12" cy="12" r="10" fill="#fbc116" /><path d="M12 12L3.3 7A10 10 0 0 0 11 22z" fill="#2fa24f" /><path d="M3.3 7A10 10 0 0 1 20.7 7H12v5z" fill="#e33b2e" /><circle cx="12" cy="12" r="5" fill="#fff" /><circle cx="12" cy="12" r="3.8" fill="#3b7ded" /></>, "dot"],
  ["Copilot", null],
  ["Explorador", <><path d="M2 4h7l2 2h11v13H2z" fill="#e7a721" /><path d="M2 8h20v12H2z" fill="#fdd255" /><path d="M6 16h12v5H6z" fill="#1b78c4" /></>],
  ["Store", <><path d="M8 6V3h8v3" fill="none" stroke="#4fc0ee" strokeWidth="1.6" /><rect x="3" y="5" width="18" height="17" rx="2" fill="#174f8c" /><path d="M8 9h3.5v3.5H8z" fill="#f05325" /><path d="M12.5 9H16v3.5h-3.5z" fill="#80bb0a" /><path d="M8 13.5h3.5V17H8z" fill="#05a6f0" /><path d="M12.5 13.5H16V17h-3.5z" fill="#ffba08" /></>],
  ["Navegador seguro", <><circle cx="12" cy="12" r="10.5" fill="#f5b52f" /><path d="M10 1.7a10.5 10.5 0 0 1 11.5 15L12 12z" fill="#6b4fd0" /><path d="M2.5 7.5A10.5 10.5 0 0 1 12 1.5V12z" fill="#e0662b" /><circle cx="12" cy="12" r="6.5" fill="#fff" /><path d="M12 8a2 2 0 0 1 1 3.7V16h-2v-4.300A2 2 0 0 1 12 8z" fill="#333" /></>, "dot"],
  ["Disney+", <><rect x="1" y="1" width="22" height="22" fill="#0b3c49" /><path d="M1 1h22v7H1z" fill="#0f5e68" /><path d="M5 10c4-5 11-4 14-1" stroke="#9fe" fill="none" strokeWidth=".8" /><text x="12" y="15.5" textAnchor="middle" fontSize="6.5" fontStyle="italic" fontFamily="Liberation Serif, serif" fill="#fff">Disney+</text></>],
  ["Enlace móvil", <><rect x="2" y="2" width="11" height="15" rx="1.5" fill="#1a86dc" /><rect x="6" y="5" width="13" height="15" rx="1.5" fill="#2f9cf0" /></>, "badge"],
  ["Netflix", <><path d="M8 4h3v17l-3 .5z" fill="#a90d16" /><path d="M13 4h3v17.5l-3-.5z" fill="#a90d16" /><path d="M8 4h3l5 17.5-3-.5z" fill="#e01020" /></>],
  ["Escritorio remoto", <><circle cx="12" cy="12" r="9.8" fill="#fff" /><circle cx="12" cy="12" r="8.6" fill="#c93a2b" /><path d="M7 10l4 3.5L7 17M17 7l-4 3.5 4 3.5" stroke="#fff" fill="none" strokeWidth="1.8" /></>],
  ["OBS", <><circle cx="12" cy="12" r="9.8" fill="#d5d5d5" /><circle cx="12" cy="12" r="9" fill="#262427" /><g stroke="#cfcfcf" strokeWidth="1.5" fill="none"><path d="M12 12c-3-1-4-4-2-7M12 12c2-2 6-2 7 1M12 12c0 3-3 5-6 4" /></g><circle cx="19.5" cy="3" r="5" fill="#e8120c" /></>, "dot"],
  ["Power BI", <><path d="M14 1h8v21h-8z" fill="#d9a016" /><path d="M9 7h8v15H9z" fill="#edc52c" /><path d="M4 12h8v10H4z" fill="#f7df60" /></>, "active"],
  ["TikTok", <><rect x="1" y="1" width="22" height="22" rx="2" fill="#e4174e" /><path d="M13 5v10a3 3 0 1 1-3-3M13 5c.5 3 2 4 4.5 4.5" stroke="#fff" strokeWidth="2.4" fill="none" /></>, "dot"],
  ["Bloc de notas", <><rect x="4" y="3" width="17" height="19" rx="1" fill="#6fd0ef" /><path d="M4 20h17v2H4z" fill="#2a7fa0" /><path d="M6 1v4M9.5 1v4M13 1v4M16.5 1v4M19.5 1v4" stroke="#d9f4fc" /><path d="M7 8.5h11M7 12h11M7 15.5h11" stroke="#1d6484" strokeWidth="1.5" /></>, "dot"],
];

const Taskbar = () => (
  <footer className="grid h-[41px] grid-cols-[1fr_auto_1fr] items-center bg-[#2b6066] text-[10px] text-white">
    <div className="flex items-center gap-1 pl-4 leading-[13px]">
      <div className="relative">
        <svg viewBox="0 0 22 24" className="h-6 w-[22px]"><path d="M7 2c0 6 4 8 8 8-2 6-12 6-14 1 4 0 6-4 6-9z" fill="#f4a545" /><path d="M5 22a4.5 4.5 0 0 1 0-9 6 6 0 0 1 11-1 5 5 0 0 1 1 10z" fill="#ccdcf7" /></svg>
        <span className="absolute -top-0.5 left-2.5 flex size-[13px] items-center justify-center rounded-full bg-[#c0202b] text-[8px]">1</span>
      </div>
      <div>7°C<br /><span className="text-[#e0ecec]">Mayorm. nublado</span></div>
    </div>
    <div className="flex items-center">
      <button aria-label="Inicio" className="ml-0.5">
        <svg viewBox="0 0 20 20" className="size-5" fill="#4cc6fb"><path d="M0 0h9.5v9.5H0zM10.5 0H20v9.5h-9.500zM0 10.500h9.500V20H0zM10.500 10.500H20V20h-9.500z" /></svg>
      </button>
      <label className="ml-[11px] flex h-[26px] w-[182px] items-center gap-2 rounded-full bg-[#f3f7fa] px-2 text-[#222]">
        <Search className="size-3.5" strokeWidth={2} />
        <input aria-label="Buscar" placeholder="Buscar" className="w-full bg-transparent text-[11px] outline-none placeholder:text-[#666]" />
      </label>
      <div className="ml-1 grid w-[512px] grid-cols-14">
        {apps.map(([n, g, mark]) => (
          <button key={n} aria-label={n} className={`relative flex h-[35px] items-center justify-center rounded ${mark === "active" ? "bg-white/10" : ""}`}>
            {g ? <svg viewBox="0 0 24 24" className="size-[22px] overflow-visible">{g}</svg> : <CopilotShape id="tb" className="size-[22px]" />}
            {mark === "badge" && <span className="absolute top-0.5 right-0.5 flex size-[13px] items-center justify-center rounded-full bg-[#66d3cf] text-[9px] text-[#123]">6</span>}
            {(mark === "dot" || mark === "active") && <span className={`absolute bottom-0.5 h-0.5 rounded-full ${mark === "active" ? "w-3 bg-[#7fdedb]" : "w-1.5 bg-[#a5bcbe]"}`} />}
          </button>
        ))}
      </div>
    </div>
    <div className="flex items-center justify-end pr-4">
      <button aria-label="Iconos ocultos"><ChevronUp className="size-3.5" /></button>
      <Mic className="ml-3 size-3.5" strokeWidth={1.5} />
      <span className="ml-4 text-[9px]">ESP</span>
      <svg viewBox="0 0 16 16" className="ml-[15px] size-4" fill="none" stroke="#fff" strokeWidth="1.1"><path d="M9.5 2.5H2v9h9.5V8M4.5 14.5h5M7 11.5v3M11.5 2h3v4h-3zM13 6v8" /></svg>
      <Volume2 className="ml-1 size-4" strokeWidth={1.4} />
      <div className="ml-3 text-right leading-[13px]">4:05<br />6/10/2025</div>
      <svg viewBox="0 0 14 14" className="ml-1.5 size-3.5"><path d="M2 10.5c1-1 1-2 1-4a4 4 0 0 1 8 0c0 2 0 3 1 4z" fill="#fff" /><path d="M5.5 12h3" stroke="#fff" strokeWidth="1.5" /><path d="M5.5 5h3l-3 3.5h3" stroke="#2b6066" fill="none" strokeWidth=".9" /><path d="M10.5 1h2l-2 2.5h2" stroke="#fff" fill="none" strokeWidth=".9" /></svg>
    </div>
  </footer>
);

export default function App() {
  return (
    <div className="relative flex min-h-screen w-full flex-col bg-[#f1f1f0] font-['Open_Sans',sans-serif]">
      <TitleBar />
      <Tabs />
      <Ribbon />
      <div className="flex flex-1 pt-px">
        <Rail />
        <Report />
        <Pane label="Filtros" filter w="w-[27px]" className="border-[#999] bg-white" />
        <Pane label="Marcadores" className="border-[#e2e2e2]" />
        <Pane label="Visualizaciones" className="border-[#e2e2e2]" />
        <Pane label="Datos" className="border-[#e2e2e2]" />
      </div>
      <SheetTabs />
      <StatusBar />
      <Taskbar />
      <svg viewBox="0 0 12 19" className="pointer-events-none absolute top-[287px] left-[1141px] h-[19px] w-3"><path d="M1 1v14.5l3.5-3.2 2.3 5.2 2.2-1-2.3-5H11z" fill="#fff" stroke="#333" /></svg>
    </div>
  );
}
